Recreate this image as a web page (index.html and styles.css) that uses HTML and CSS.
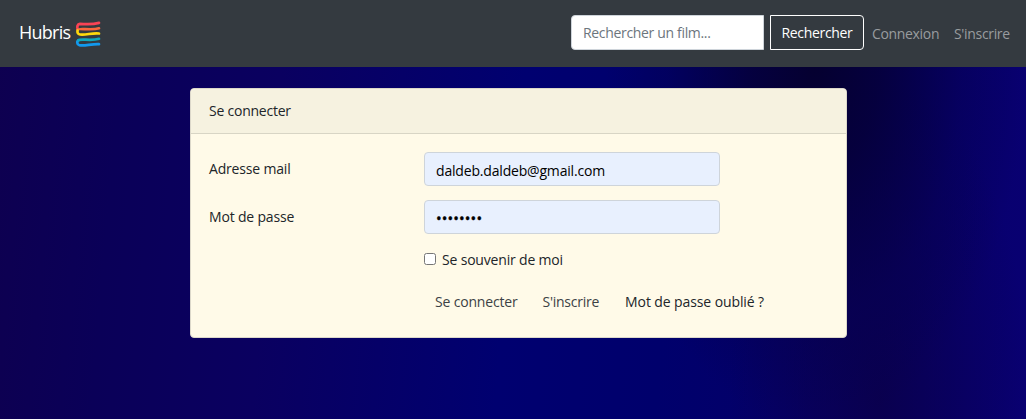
FILE: index.html
```html
<!DOCTYPE html>
<html lang="fr">
<head>
<meta charset="utf-8">
<title>Hubris</title>
<link rel="stylesheet" href="styles.css">
</head>
<body>
<nav class="navbar">
  <a class="brand" href="#"><span class="brand-name">Hubris</span>
    <svg class="logo" viewBox="0 0 28 28" fill="none" stroke-width="2.7" stroke-linecap="round">
      <path stroke="#1299ee" d="M3.8 20.2C1.6 21 1.8 24.6 4.4 25.2C9 26.4 16 23.9 24 24.2"/>
      <path stroke="#10a9bc" d="M3.5 20.2C6 18.4 16 21.2 24 18.8"/>
      <path stroke="#f94355" d="M2.6 9.3C1.8 7 2.5 3.9 4.8 3.8C10 4.2 18 4.5 24 2.9"/>
      <path stroke="#f9673d" d="M2.6 9.8C3.5 7.5 16 10.8 24 8.3"/>
      <path stroke="#ffd90c" d="M2.6 10.6C2.2 12 2.6 14.2 5 14.5C11 15.3 17 12.7 24 13.5"/>
    </svg>
  </a>
  <form class="search">
    <input class="search-input" type="text" placeholder="Rechercher un film...">
    <button class="search-button" type="button">Rechercher</button>
  </form>
  <a class="nav-link connexion" href="#">Connexion</a>
  <a class="nav-link" href="#">S'inscrire</a>
</nav>
<main class="card">
  <div class="card-header">Se connecter</div>
  <form class="card-body">
    <div class="row"><label class="label" for="email">Adresse mail</label><input class="field email" id="email" type="text" value="daldeb.daldeb@gmail.com"></div>
    <div class="row"><label class="label" for="password">Mot de passe</label><input class="field password" id="password" type="text" value="••••••••"></div>
    <label class="remember"><input class="checkbox" type="checkbox"><span>Se souvenir de moi</span></label>
    <div class="actions">
      <a class="action" href="#">Se connecter</a>
      <a class="action signup" href="#">S'inscrire</a>
      <a class="action forgot" href="#">Mot de passe oublié ?</a>
    </div>
  </form>
</main>
</body>
</html>
```
FILE: styles.css
```css
* { box-sizing: border-box; }
body {
  margin: 0;
  height: 419px;
  overflow: hidden;
  font: 14px/22px "Open Sans", "Noto Sans", sans-serif;
  letter-spacing: -.18px;
  color: #212529;
  background:
    radial-gradient(ellipse 210px 360px at 815px 67px, rgba(5,0,45,.95), rgba(5,0,52,.8) 30%, rgba(5,0,65,.3) 70%, rgba(5,0,75,0)),
    radial-gradient(ellipse 150px 320px at 880px 400px, rgba(10,0,76,.9), rgba(10,0,82,.4) 60%, rgba(10,0,86,0)),
    linear-gradient(95deg, #0e0050 0, #0a0058 12%, #0a0060 27%, #000070 50%, #00006c 65%, #050068 80%, #090072 100%);
}
a { color: inherit; text-decoration: none; }
input, button { font: inherit; letter-spacing: inherit; margin: 0; outline: none; }
.navbar {
  display: flex;
  align-items: flex-start;
  height: 67px;
  padding: 15px 16px 0 19px;
  background: #343a40;
  letter-spacing: -.33px;
}
.brand { display: flex; margin-right: auto; color: #fff; font-size: 18px; line-height: 35px; }
.brand-name { width: 56px; letter-spacing: -.75px; }
.logo { width: 28px; height: 28px; margin-top: 5px; }
.search { display: flex; gap: 6px; margin-right: 8px; }
.search-input {
  width: 193px;
  height: 35px;
  padding: 0 11px;
  border: 1px solid #ced4da;
  border-radius: 4px 0 0 4px;
  background: #fff;
}
.search-input::placeholder { color: #6c757d; opacity: 1; }
.search-button {
  width: 94px;
  height: 35px;
  padding: 0;
  border: 1px solid #fff;
  border-radius: 0 4px 4px 0;
  background: transparent;
  color: #fff;
}
.nav-link { width: 56px; padding-top: 8px; color: #999c9f; white-space: nowrap; }
.connexion { width: 67px; margin-right: 15px; }
.card {
  width: 657px;
  height: 250px;
  margin: 21px 0 0 190px;
  border: 1px solid #dcd8ca;
  border-radius: 4px;
  overflow: hidden;
  background: #fffae8;
}
.card-header {
  height: 45px;
  padding: 11px 18px;
  border-bottom: 1px solid #d8d5c5;
  background: #f6f2e0;
  letter-spacing: -.23px;
}
.card-body { padding: 18px 17px; }
.row { display: flex; height: 34px; margin-bottom: 14px; }
.label { width: 216px; padding: 6px 0 0 1px; letter-spacing: -.18px; }
.field {
  width: 296px;
  height: 34px;
  padding: 2px 11px 0;
  border: 1px solid #ced4da;
  border-radius: 4px;
  background: #e8f0fe;
  color: #000;
}
.password { font-size: 15px; letter-spacing: .13px; -webkit-text-stroke: .4px #000; }
.remember { display: flex; align-items: center; height: 22px; margin: 15px 0 0 216px; }
.checkbox { width: 12px; height: 12px; margin: -2px 6px 0 0; }
.actions { display: flex; margin: 20px 0 0 227px; white-space: nowrap; }
.action { color: #3c4144; }
.signup { margin-left: 25px; letter-spacing: -.25px; }
.action.forgot { margin-left: 26px; color: #212529; letter-spacing: -.1px; }
```
